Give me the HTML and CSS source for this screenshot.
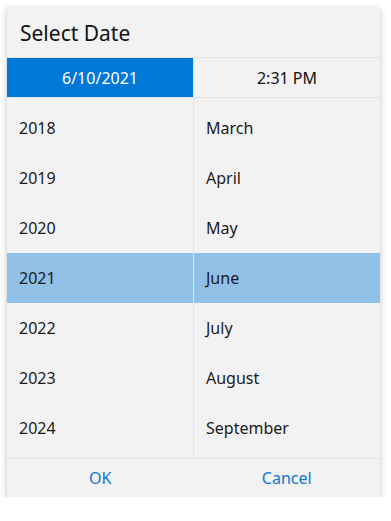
FILE: index.html
```html
<!DOCTYPE html>
<html>
<head>
<meta charset="utf-8">
<link rel="stylesheet" href="styles.css">
</head>
<body>
<div class="dialog">
  <div class="title">Select Date</div>
  <div class="tabs">
    <div class="tab active">6/10/2021</div>
    <div class="tab">2:31 PM</div>
  </div>
  <div class="lists">
    <div class="col years">
      <div class="item">2018</div>
      <div class="item">2019</div>
      <div class="item">2020</div>
      <div class="item sel">2021</div>
      <div class="item">2022</div>
      <div class="item">2023</div>
      <div class="item">2024</div>
    </div>
    <div class="col months">
      <div class="item">March</div>
      <div class="item">April</div>
      <div class="item">May</div>
      <div class="item sel">June</div>
      <div class="item">July</div>
      <div class="item">August</div>
      <div class="item">September</div>
    </div>
  </div>
  <div class="footer">
    <div class="btn">OK</div>
    <div class="btn">Cancel</div>
  </div>
</div>
</body>
</html>
```
FILE: styles.css
```css
html, body {
  margin: 0;
  padding: 0;
  background: #ffffff;
}
body {
  padding: 7px 0 0 7px;
  font-family: "Noto Sans", "Open Sans", sans-serif;
  color: #1a1a1a;
}
.dialog {
  width: 373px;
  height: 490px;
  background: #f2f2f2;
  border-radius: 3px;
  box-shadow: 0 2px 6px rgba(0,0,0,0.25);
  display: flex;
  flex-direction: column;
  overflow: hidden;
}
.title {
  height: 50px;
  box-sizing: border-box;
  padding: 12px 0 0 13px;
  font-size: 21px;
  line-height: 28px;
  color: #111;
}
.tabs {
  display: flex;
  height: 39px;
  border-top: 1px solid #e3e3e3;
  border-bottom: 1px solid #e3e3e3;
}
.tab {
  flex: 1;
  display: flex;
  align-items: center;
  justify-content: center;
  font-size: 16px;
  color: #111;
}
.tab.active {
  background: #0078d7;
  color: #fff;
}
.tab + .tab {
  border-left: 1px solid #e3e3e3;
}
.lists {
  display: flex;
  height: 360px;
  border-bottom: 1px solid #e3e3e3;
}
.col {
  flex: 1;
  padding: 5px 0;
  display: flex;
  flex-direction: column;
}
.col + .col {
  border-left: 1px solid #e3e3e3;
}
.item {
  height: 50px;
  flex: none;
  display: flex;
  align-items: center;
  font-size: 16px;
  padding-left: 12px;
}
.item.sel {
  background: #91c0e7;
}
.footer {
  flex: 1;
  display: flex;
}
.btn {
  flex: 1;
  display: flex;
  align-items: center;
  justify-content: center;
  font-size: 16px;
  color: #0a78d4;
}
```
